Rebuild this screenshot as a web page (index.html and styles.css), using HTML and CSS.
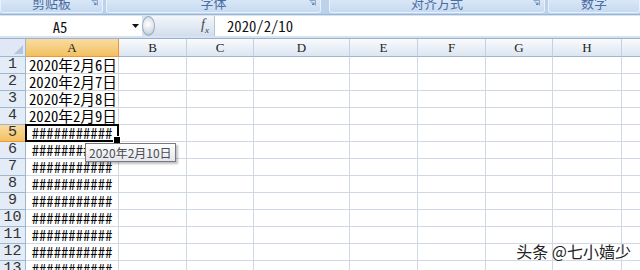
FILE: index.html
```html
<!DOCTYPE html>
<html lang="zh-CN">
<head>
    <meta charset="UTF-8">
    <title>Sheet1</title>
    <link rel="stylesheet" href="styles.css">
</head>
<body>
    <div class="ribbon">
        <div class="group g1"><span>剪贴板</span><svg class="launcher" width="7" height="6" viewBox="0 0 7 6"><path d="M0.5 0.5h6v5" fill="none" stroke="#8aa6c9"/><path d="M2 1.5l3 3M5 2.5v2h-2" fill="none" stroke="#5b7fae"/></svg></div>
        <div class="group g2"><span>字体</span><svg class="launcher" width="7" height="6" viewBox="0 0 7 6"><path d="M0.5 0.5h6v5" fill="none" stroke="#8aa6c9"/><path d="M2 1.5l3 3M5 2.5v2h-2" fill="none" stroke="#5b7fae"/></svg></div>
        <div class="group g3"><span>对齐方式</span><svg class="launcher" width="7" height="6" viewBox="0 0 7 6"><path d="M0.5 0.5h6v5" fill="none" stroke="#8aa6c9"/><path d="M2 1.5l3 3M5 2.5v2h-2" fill="none" stroke="#5b7fae"/></svg></div>
        <div class="group g4"><span>数字</span></div>
    </div>

    <div class="formula-bar">
        <div class="name-box">
            <span>A5</span>
            <svg class="drop" width="7" height="4" viewBox="0 0 7 4"><path d="M0 0h7l-3.5 4z" fill="#111"/></svg>
        </div>
        <div class="splitter">
            <div class="knob"></div>
            <span class="fx">f<sub>x</sub></span>
        </div>
        <div class="formula">2020/2/10</div>
    </div>

    <div class="sheet">
        <div class="row head">
            <div class="corner"></div>
            <div class="ch on">A</div><div class="ch">B</div><div class="ch">C</div><div class="ch">D</div>
            <div class="ch">E</div><div class="ch">F</div><div class="ch">G</div><div class="ch">H</div><div class="ch"></div>
        </div>
        <div class="row">
            <div class="rh">1</div><div class="c a">2020年2月6日</div>
            <div class="c"></div><div class="c"></div><div class="c"></div><div class="c"></div><div class="c"></div><div class="c"></div><div class="c"></div><div class="c"></div>
        </div>
        <div class="row">
            <div class="rh">2</div><div class="c a">2020年2月7日</div>
            <div class="c"></div><div class="c"></div><div class="c"></div><div class="c"></div><div class="c"></div><div class="c"></div><div class="c"></div><div class="c"></div>
        </div>
        <div class="row">
            <div class="rh">3</div><div class="c a">2020年2月8日</div>
            <div class="c"></div><div class="c"></div><div class="c"></div><div class="c"></div><div class="c"></div><div class="c"></div><div class="c"></div><div class="c"></div>
        </div>
        <div class="row">
            <div class="rh">4</div><div class="c a">2020年2月9日</div>
            <div class="c"></div><div class="c"></div><div class="c"></div><div class="c"></div><div class="c"></div><div class="c"></div><div class="c"></div><div class="c"></div>
        </div>
        <div class="row">
            <div class="rh on">5</div><div class="c a hash sel">###########</div>
            <div class="c"></div><div class="c"></div><div class="c"></div><div class="c"></div><div class="c"></div><div class="c"></div><div class="c"></div><div class="c"></div>
        </div>
        <div class="row">
            <div class="rh">6</div><div class="c a hash">###########<div class="tip">2020年2月10日</div></div>
            <div class="c"></div><div class="c"></div><div class="c"></div><div class="c"></div><div class="c"></div><div class="c"></div><div class="c"></div><div class="c"></div>
        </div>
        <div class="row">
            <div class="rh">7</div><div class="c a hash">###########</div>
            <div class="c"></div><div class="c"></div><div class="c"></div><div class="c"></div><div class="c"></div><div class="c"></div><div class="c"></div><div class="c"></div>
        </div>
        <div class="row">
            <div class="rh">8</div><div class="c a hash">###########</div>
            <div class="c"></div><div class="c"></div><div class="c"></div><div class="c"></div><div class="c"></div><div class="c"></div><div class="c"></div><div class="c"></div>
        </div>
        <div class="row">
            <div class="rh">9</div><div class="c a hash">###########</div>
            <div class="c"></div><div class="c"></div><div class="c"></div><div class="c"></div><div class="c"></div><div class="c"></div><div class="c"></div><div class="c"></div>
        </div>
        <div class="row">
            <div class="rh">10</div><div class="c a hash">###########</div>
            <div class="c"></div><div class="c"></div><div class="c"></div><div class="c"></div><div class="c"></div><div class="c"></div><div class="c"></div><div class="c"></div>
        </div>
        <div class="row">
            <div class="rh">11</div><div class="c a hash">###########</div>
            <div class="c"></div><div class="c"></div><div class="c"></div><div class="c"></div><div class="c"></div><div class="c"></div><div class="c"></div><div class="c"></div>
        </div>
        <div class="row">
            <div class="rh">12</div><div class="c a hash">###########</div>
            <div class="c"></div><div class="c"></div><div class="c"></div><div class="c"></div><div class="c"></div><div class="c"></div><div class="c"></div><div class="c"></div>
        </div>
        <div class="row">
            <div class="rh">13</div><div class="c a hash">###########</div>
            <div class="c"></div><div class="c"></div><div class="c"></div><div class="c"></div><div class="c"></div><div class="c"></div><div class="c"></div><div class="c"></div>
        </div>
    </div>

    <div class="watermark">头条 @七小嫱少</div>
</body>
</html>
```

FILE: styles.css
```css
* {
    box-sizing: border-box;
}
body {
    margin: 0;
    width: 640px;
    height: 270px;
    overflow: hidden;
    position: relative;
    background: #fff;
    font-family: "Noto Sans CJK SC", sans-serif;
}

/* ribbon group captions */
.ribbon {
    display: flex;
    height: 14px;
    background: #bcd1ea;
    overflow: hidden;
}
.group {
    position: relative;
    height: 13px;
    display: flex;
    justify-content: center;
    background: linear-gradient(#d9e7f7, #c6daf1);
    border: 1px solid #e9f1fa;
    border-top: none;
    border-radius: 0 0 3px 3px;
}
.group span {
    font-size: 13px;
    line-height: 13px;
    margin-top: -4px;
    color: #4a6ca2;
}
.launcher {
    position: absolute;
    right: 4px;
    top: 0;
}
.g1 { width: 103px; }
.g2 { width: 215px; margin-left: 3px; }
.g3 { width: 216px; margin-left: 8px; }
.g4 { flex: 1; margin-left: 3px; }

/* formula bar */
.formula-bar {
    display: flex;
    height: 24px;
    padding: 1px 0 2px;
    background: #d6e3f2;
    border-top: 1px solid #9db6d6;
}
.name-box {
    width: 142px;
    display: flex;
    align-items: center;
    background: #fff;
    font-family: "Noto Sans Mono CJK SC", "Liberation Mono", monospace;
    font-size: 14.67px;
    color: #111;
}
.name-box span {
    width: 120px;
    text-align: center;
}
.drop {
    margin-left: 12px;
}
.splitter {
    width: 72px;
    display: flex;
    align-items: center;
    justify-content: space-between;
    background: linear-gradient(#f3f6fb, #d2deec);
    border-radius: 10px 0 0 10px;
    padding-right: 5px;
}
.knob {
    width: 13px;
    height: 20px;
    border-radius: 50%;
    background: radial-gradient(circle at 45% 40%, #ffffff, #d3dbe5 65%, #a9b8ca);
    border: 1px solid #9aabc0;
}
.fx {
    font-family: "Liberation Serif", serif;
    font-style: italic;
    font-size: 14px;
    color: #444;
}
.fx sub {
    font-size: 9px;
}
.formula {
    flex: 1;
    background: #fff;
    border-left: 1px solid #b5c5d9;
    padding-left: 12px;
    font-family: "Noto Sans Mono CJK SC", "Liberation Mono", monospace;
    font-size: 14.67px;
    line-height: 20px;
    color: #111;
}

/* sheet grid */
.sheet {
    border-top: 1px solid #9db0c8;
}
.row {
    display: grid;
    grid-template-columns: 26px 93px 68px 67px 96px 68px 68px 67px 69px 38px;
    height: 17px;
}
.row.head {
    height: 18px;
}
.corner {
    position: relative;
    background: #dfe8f4;
    border-right: 1px solid #9eb6ce;
    border-bottom: 1px solid #9eb6ce;
}
.corner::after {
    content: "";
    position: absolute;
    right: 2px;
    bottom: 2px;
    border-left: 9px solid transparent;
    border-bottom: 9px solid #b4c6de;
}
.ch {
    background: linear-gradient(#f9fbfd, #dce5f1);
    border-right: 1px solid #c2d0e2;
    border-bottom: 1px solid #9eb6ce;
    text-align: center;
    font-family: "Liberation Serif", serif;
    font-size: 13px;
    line-height: 17px;
    color: #222;
}
.ch.on,
.rh.on {
    background: linear-gradient(#f9dca3, #f1c15f);
    border-right-color: #f29536;
    border-bottom-color: #f29536;
}
.rh {
    background: #e4ecf7;
    border-right: 1px solid #9eb6ce;
    border-bottom: 1px solid #9eb6ce;
    text-align: center;
    font-family: "Liberation Mono", monospace;
    font-size: 15px;
    line-height: 16px;
    color: #333;
}
.c {
    position: relative;
    border-right: 1px solid #d0d7e5;
    border-bottom: 1px solid #d0d7e5;
    white-space: nowrap;
    font-family: "Noto Sans Mono CJK SC", "Liberation Mono", monospace;
    font-size: 14.67px;
    line-height: 16px;
    color: #000;
}
.c.a {
    padding-left: 3px;
}
.c.hash {
    padding-left: 0;
    text-align: center;
}
.sel::after {
    content: "";
    position: absolute;
    left: -1px;
    top: -1px;
    right: -1px;
    bottom: -1px;
    border: 2px solid #000;
}
.sel::before {
    content: "";
    position: absolute;
    right: -3px;
    bottom: -3px;
    width: 6px;
    height: 6px;
    background: #000;
    border: 1px solid #fff;
    z-index: 1;
}

/* hover tip */
.tip {
    position: absolute;
    left: 59px;
    top: 1px;
    z-index: 2;
    height: 19px;
    padding: 0 3px;
    background: linear-gradient(#ffffff, #e4e6ef);
    border: 1px solid #7a7a7a;
    box-shadow: 2px 2px 2px rgba(0, 0, 0, 0.25);
    font-family: "Noto Sans CJK SC", sans-serif;
    font-size: 12px;
    line-height: 17px;
    color: #4c4c4c;
    text-align: left;
}

.watermark {
    position: absolute;
    right: 9px;
    bottom: 7px;
    font-size: 16px;
    color: #222;
    text-shadow: 0 0 2px #fff, 0 0 2px #fff;
}
```
